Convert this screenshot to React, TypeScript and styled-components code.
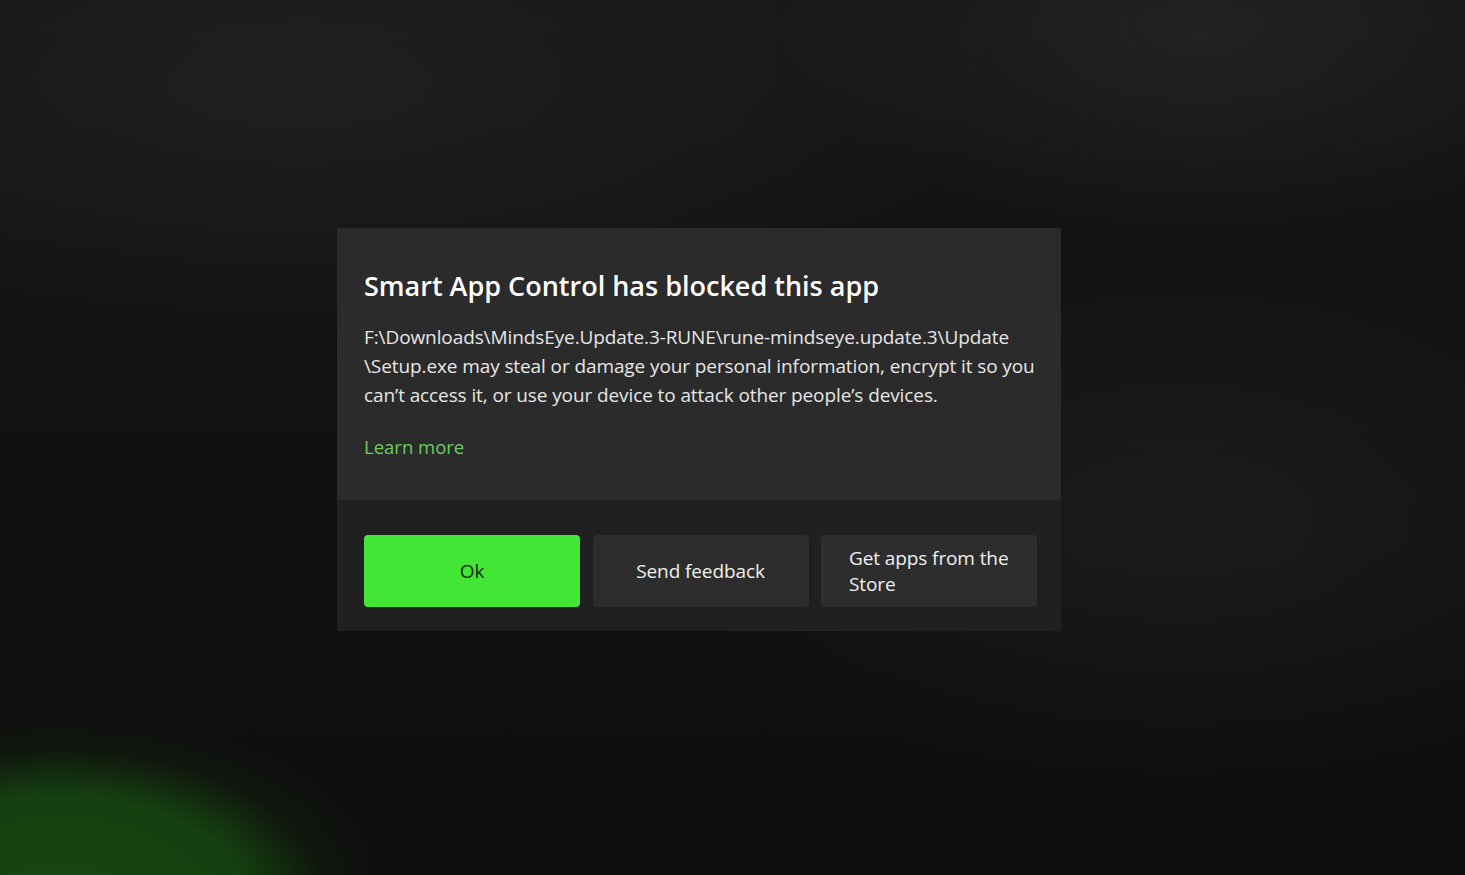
import React from 'react';
import styled, { createGlobalStyle } from 'styled-components';

const GlobalStyle = createGlobalStyle`
  html, body {
    margin: 0;
    padding: 0;
    height: 100%;
  }
  body {
    font-family: 'Open Sans', 'Noto Sans', 'Liberation Sans', sans-serif;
    background: #111;
  }
`;

const Screen = styled.div`
  width: 100vw;
  height: 100vh;
  overflow: hidden;
  display: flex;
  align-items: flex-start;
  justify-content: flex-start;
  padding: 228px 0 0 337px;
  box-sizing: border-box;
  background:
    radial-gradient(ellipse 330px 180px at 60px 895px, #17450f 0%, #154010 55%, rgba(18, 40, 12, 0.35) 80%, rgba(0, 0, 0, 0) 100%),
    radial-gradient(ellipse 520px 260px at 1180px 520px, rgba(34, 34, 34, 0.6), rgba(0, 0, 0, 0) 100%),
    radial-gradient(ellipse 420px 200px at 1200px 30px, rgba(40, 40, 40, 0.7), rgba(0, 0, 0, 0) 100%),
    radial-gradient(ellipse 700px 260px at 300px 80px, rgba(36, 36, 36, 0.7), rgba(0, 0, 0, 0) 100%),
    linear-gradient(180deg, #161616 0%, #121212 45%, #0e0e0e 100%);
`;

const Dialog = styled.div`
  width: 724px;
  display: flex;
  flex-direction: column;
  color: #ffffff;
`;

const Body = styled.div`
  background: #2b2b2b;
  height: 272px;
  box-sizing: border-box;
  padding: 39px 16px 0 27px;
`;

const Title = styled.h1`
  margin: 0;
  font-size: 27px;
  font-weight: 600;
  line-height: 38px;
  color: #ffffff;
`;

const Message = styled.p`
  margin: 18px 0 0;
  font-size: 19px;
  line-height: 29px;
  letter-spacing: -0.1px;
  white-space: nowrap;
  color: #e6e6e6;
`;

const Link = styled.a`
  display: inline-block;
  margin-top: 24px;
  font-size: 18.5px;
  line-height: 26px;
  color: #6ccb5f;
  text-decoration: none;
`;

const Footer = styled.div`
  background: #202020;
  height: 131px;
  box-sizing: border-box;
  padding: 35px 24px 0 27px;
  display: grid;
  grid-template-columns: repeat(3, 216px);
  column-gap: 12.5px;
  align-content: start;
`;

const Button = styled.button<{ primary?: boolean }>`
  height: 72px;
  border: none;
  border-radius: 4px;
  font-family: inherit;
  font-size: 19px;
  line-height: 26px;
  letter-spacing: -0.1px;
  padding: 0 12px 0 28px;
  text-align: ${(p) => (p.primary ? 'center' : 'left')};
  background: ${(p) => (p.primary ? '#43e635' : '#2d2d2d')};
  color: ${(p) => (p.primary ? '#0a2a06' : '#f0f0f0')};
  display: flex;
  align-items: center;
  justify-content: ${(p) => (p.primary ? 'center' : 'flex-start')};
`;

const CenteredButton = styled(Button)`
  justify-content: center;
  padding: 0 12px;
`;

export default function App() {
  return (
    <Screen>
      <GlobalStyle />
      <Dialog>
        <Body>
          <Title>Smart App Control has blocked this app</Title>
          <Message>
            F:\Downloads\MindsEye.Update.3-RUNE\rune-mindseye.update.3\Update
            <br />
            \Setup.exe may steal or damage your personal information, encrypt it so you
            <br />
            can’t access it, or use your device to attack other people’s devices.
          </Message>
          <Link href="#">Learn more</Link>
        </Body>
        <Footer>
          <CenteredButton primary>Ok</CenteredButton>
          <CenteredButton>Send feedback</CenteredButton>
          <Button>
            Get apps from the
            <br />
            Store
          </Button>
        </Footer>
      </Dialog>
    </Screen>
  );
}
